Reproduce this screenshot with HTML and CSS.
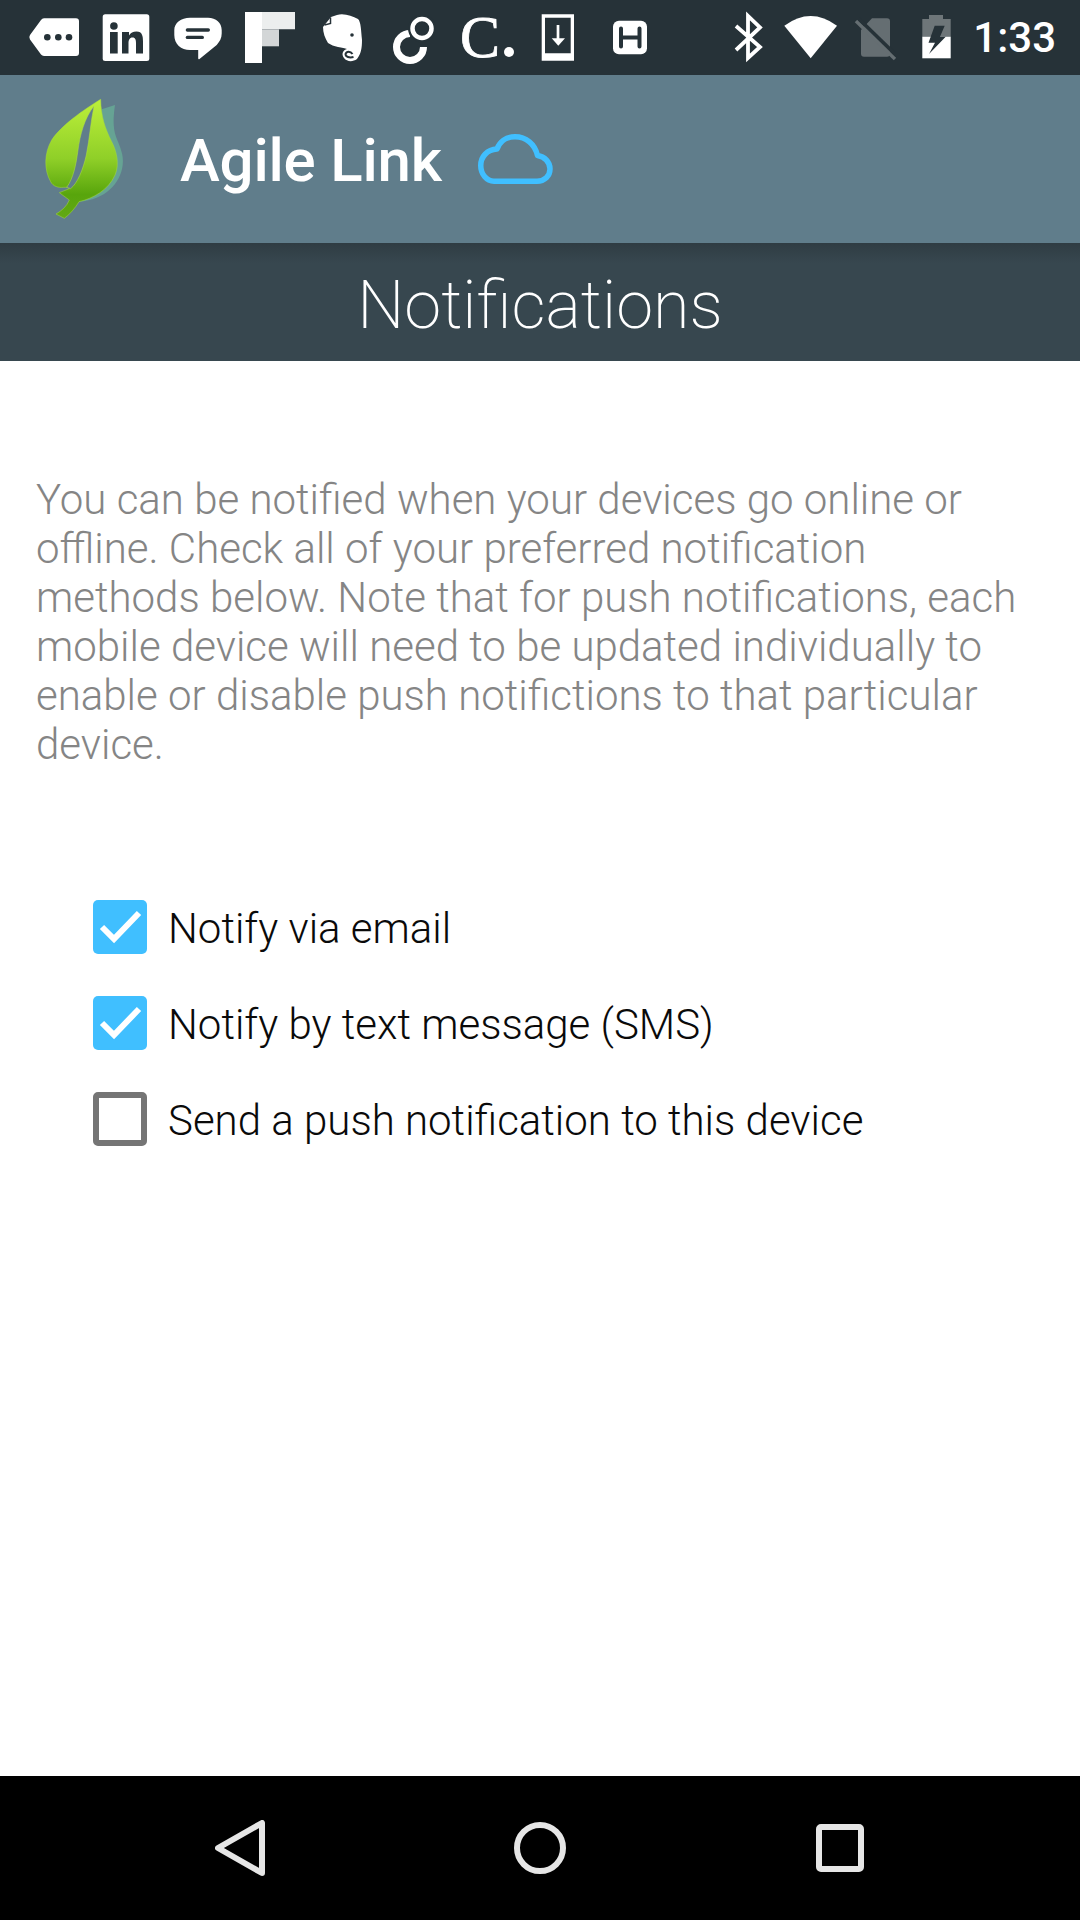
FILE: index.html
```html
<!DOCTYPE html>
<html lang="en">
<head>
<meta charset="utf-8">
<title>Agile Link - Notifications</title>
<link rel="stylesheet" href="styles.css">
</head>
<body>
<div class="screen">
  <div class="status">
    <div class="status-left">
      <div class="slot"><svg class="ico" viewBox="18 0 72 75"><path d="M44 18.300H76a3 3 0 0 1 3 3V53a3 3 0 0 1-3 3H44a4 4 0 0 1-3-1.500L30 39.500a4 4 0 0 1 0-4.400L41 20a4 4 0 0 1 3-1.700z" fill="#fff"/><circle cx="47.300" cy="37.300" r="3.300" fill="#263238"/><circle cx="58.300" cy="37.300" r="3.300" fill="#263238"/><circle cx="69" cy="37.300" r="3.300" fill="#263238"/></svg></div>
      <div class="slot"><svg class="ico" viewBox="90 0 72 75"><rect x="102.700" y="14.300" width="46.600" height="46.700" rx="2.500" fill="#fff"/><path d="M110 32h7.700v21.500H110zM122 32h7v3.500c1.500-2.500 4-4 7.500-4 6 0 6.500 5 6.500 10V53.500h-7V43c0-3-.5-5.500-3.500-5.500s-4 2.500-4 5.500v10.500H122z" fill="#263238"/><circle cx="113.900" cy="26" r="3.800" fill="#263238"/></svg></div>
      <div class="slot"><svg class="ico" viewBox="162 0 72 75"><path d="M190 17.700h18c8 0 13.700 5 13.700 12.300v3.500c0 4.500-2 8-5 11.500L199.500 59c-.7.500-1.300.3-1.300-.7V50H190c-9 0-15.700-6-15.700-15v-5c0-7 6.700-12.300 15.700-12.300z" fill="#fff"/><rect x="185.700" y="28.300" width="24.300" height="3.400" rx="1.700" fill="#263238"/><rect x="185.700" y="35.700" width="18.300" height="3.400" rx="1.700" fill="#263238"/></svg></div>
      <div class="slot"><svg class="ico" viewBox="234 0 72 75"><path d="M245 12h17v51h-17z" fill="#fff"/><path d="M262 12h33v17.300h-33z" fill="#eceeee"/><path d="M262 29.300h17v17h-17z" fill="#d3d6d7"/></svg></div>
      <div class="slot"><svg class="ico" viewBox="306 0 72 75"><path d="M331 17l6-2c7-2 15 1 21 4 3 3 3 11 4 21 0 8-1 14-5 19-4 3-10 3-13-1-3-4-1-8 3-9-2-1-5-1-9-2-4-1-7-2-10-4-3-5-5-10-5-16z" fill="#fff"/><path d="M330.500 17.500v6l-6 1.500" fill="none" stroke="#263238" stroke-width="1.500"/><path d="M352.500 54c-2-3-6-3-7 0 0 3 4 4 8 3" fill="none" stroke="#263238" stroke-width="2"/><circle cx="352" cy="35" r="1.800" fill="#263238"/></svg></div>
      <div class="slot"><svg class="ico" viewBox="378 0 72 75"><path d="M410 33.500A13.500 13.500 0 1 0 423.500 47" fill="none" stroke="#fff" stroke-width="7"/><circle cx="422" cy="28.500" r="10" fill="none" stroke="#263238" stroke-width="8"/><circle cx="422" cy="28.500" r="9.500" fill="none" stroke="#fff" stroke-width="4.500"/></svg></div>
      <div class="slot slot-text"><span class="serif-c">C</span><span class="serif-dot"></span></div>
      <div class="slot"><svg class="ico" viewBox="522 0 72 75"><path d="M541.700 14.300H574V60.700H541.700z" fill="#fff"/><path d="M545 17.700h25.700v35.600H545z" fill="#263238"/><path d="M558 25v15" stroke="#fff" stroke-width="2.700"/><path d="M551.700 38.300h13.300l-6.700 7.400z" fill="#fff"/></svg></div>
      <div class="slot"><svg class="ico" viewBox="594 0 72 75"><rect x="613" y="20.700" width="34" height="33.600" rx="6" fill="#fff"/><path d="M621 28.500v18M639.500 28.500v18M621 37.500h18.500" fill="none" stroke="#263238" stroke-width="4" stroke-linecap="round"/></svg></div>
    </div>
    <div class="status-right">
      <svg class="ico-bt" viewBox="735 0 30 75"><path d="M737 26l24 21-12 11V16l12 11.500L737 50" fill="none" stroke="#fff" stroke-width="3.800"/></svg>
      <svg class="ico-wifi" viewBox="784 0 55 75"><path d="M785.300 25.700Q811.700 6.300 838 25.700L811.700 58.300z" fill="#fff"/></svg>
      <svg class="ico-sim" viewBox="855 0 42 75"><path d="M873 18.300h15a3 3 0 0 1 3 3v32.400a3 3 0 0 1-3 3h-23a3 3 0 0 1-3-3V30z" fill="#656e72"/><path d="M857 21l39 38" stroke="#656e72" stroke-width="3.500"/><path d="M859.500 18.500l39 38" stroke="#263238" stroke-width="3.500"/></svg>
      <svg class="ico-batt" viewBox="922 0 31 75"><path d="M930 15h14v4h7.700v17.700H923.300V19H930z" fill="#6e7679"/><path d="M923.300 36.700h28.400v21.600h-28.400z" fill="#fff"/><path d="M935.700 25.700h10L941 36.700h5.700L930 54l6-11.300h-6.500z" fill="#263238"/></svg>
      <span class="clock">1:33</span>
    </div>
  </div>

  <header class="appbar">
    <svg class="logo" viewBox="0 0 315 405">
      <defs>
        <linearGradient id="leafGrad" x1="0" y1="0" x2="0" y2="1">
          <stop offset="0" stop-color="#bdf03a"/>
          <stop offset="0.5" stop-color="#8fcf28"/>
          <stop offset="0.8" stop-color="#58a50c"/>
          <stop offset="1" stop-color="#62a814"/>
        </linearGradient>
      </defs>
      <path d="M215 58L255 45C250 80 248 110 258 140C270 170 282 195 278 225C272 280 225 330 147 335L200 150Z" fill="#66a394"/>
      <path d="M212 28C160 60 95 105 65 150C42 190 42 240 62 275C70 290 85 293 100 292C108 292 114 290 118 296L88 308L118 330C110 350 95 362 78 372L103 385C120 372 135 355 147 335C190 325 235 300 255 255C270 220 258 180 245 155C225 115 213 80 212 28Z" fill="url(#leafGrad)" stroke="#a8dc38" stroke-width="1.500"/>
      <path d="M192 48C163 85 150 135 144 180C138 225 130 265 110 292L122 296C142 280 159 240 169 195C179 145 182 95 192 48Z" fill="#607d8b" stroke="#b4e540" stroke-width="1.500"/>
    </svg>
    <span class="brand">Agile Link</span>
    <svg class="cloud" viewBox="0 0 75 50"><path d="M16 47.250H59C66.500 47.250 72 42 72 35C72 28 66.500 22.500 59.500 21.500C57 10 48 2.750 37 2.750C28 2.750 21.500 8 19 15C9 15.500 2.750 23 2.750 31.500C2.750 40 8.500 47.250 16 47.250Z" fill="none" stroke="#40bfff" stroke-width="5.500" stroke-linejoin="round"/></svg>
  </header>

  <div class="subbar"><h1 class="subtitle">Notifications</h1></div>

  <main class="content">
    <p class="intro">You can be notified when your devices go online or offline. Check all of your preferred notification methods below. Note that for push notifications, each mobile device will need to be updated individually to enable or disable push notifictions to that particular device.</p>
    <ul class="options">
      <li class="option"><span class="box box-on"><svg class="tick" viewBox="0 0 54 54"><path d="M9 27l12 12L46 13" fill="none" stroke="#fff" stroke-width="6"/></svg></span><span class="label">Notify via email</span></li>
      <li class="option"><span class="box box-on"><svg class="tick" viewBox="0 0 54 54"><path d="M9 27l12 12L46 13" fill="none" stroke="#fff" stroke-width="6"/></svg></span><span class="label">Notify by text message (SMS)</span></li>
      <li class="option"><span class="box box-off"></span><span class="label">Send a push notification to this device</span></li>
    </ul>
  </main>

  <nav class="navbar">
    <div class="navslot"><svg class="nav-back" viewBox="0 0 50 56"><path d="M3 28L47 3v50z" fill="none" stroke="#e6e6e6" stroke-width="6" stroke-linejoin="round"/></svg></div>
    <div class="navslot"><svg class="nav-home" viewBox="0 0 52 52"><circle cx="26" cy="26" r="23" fill="none" stroke="#e6e6e6" stroke-width="6"/></svg></div>
    <div class="navslot"><svg class="nav-recent" viewBox="0 0 48 48"><rect x="3" y="3" width="42" height="42" rx="2" fill="none" stroke="#e6e6e6" stroke-width="6"/></svg></div>
  </nav>
</div>
</body>
</html>
```

FILE: styles.css
```css
* { box-sizing: border-box; }
html, body { margin: 0; padding: 0; }
body { width: 1080px; height: 1920px; font-family: Roboto, "Liberation Sans", sans-serif; background: #fff; }

.screen { width: 1080px; height: 1920px; display: flex; flex-direction: column; overflow: hidden; }

.status { height: 75px; flex: none; background: #263238; display: flex; align-items: center; justify-content: space-between; padding-left: 18px; padding-right: 24px; }
.status-left { display: flex; }
.slot { width: 72px; height: 75px; display: flex; }
.ico { width: 72px; height: 75px; display: block; }
.slot-text { align-items: baseline; justify-content: center; color: #fff; }
.serif-c { font-family: "Liberation Serif", serif; font-size: 60px; line-height: 75px; -webkit-text-stroke: 0.8px #fff; margin-left: 2px; }
.serif-dot { width: 10px; height: 10px; border-radius: 50%; background: #fff; margin-left: 4px; }

.status-right { display: flex; align-items: center; }
.ico-bt { width: 30px; height: 75px; margin-right: 19px; }
.ico-wifi { width: 55px; height: 75px; margin-right: 16px; }
.ico-sim { width: 42px; height: 75px; margin-right: 25px; }
.ico-batt { width: 31px; height: 75px; margin-right: 21px; }
.clock { color: #fff; font-size: 42px; font-weight: 500; line-height: 75px; }

.appbar { height: 168px; flex: none; background: #607d8b; display: flex; align-items: center; padding-left: 30px; }
.logo { width: 105px; height: 135px; margin-top: -3px; }
.brand { color: #fff; font-size: 60px; font-weight: 500; margin-left: 45px; letter-spacing: -0.2px; position: relative; top: 1px; }
.cloud { width: 75px; height: 50px; margin-left: 36px; }

.subbar { height: 118px; flex: none; background: linear-gradient(#2f3c43 0, #37474f 20px); display: flex; align-items: center; justify-content: center; padding-top: 7px; }
.subtitle { margin: 0; color: #fff; font-size: 66.5px; font-weight: 200; line-height: 1; }

.content { flex: 1; padding: 114px 50px 0 36px; }
.intro { margin: 0; color: #858585; font-size: 42px; font-weight: 300; line-height: 49px; }
.options { list-style: none; margin: 131px 0 0; padding: 0 0 0 57px; display: flex; flex-direction: column; gap: 42px; }
.option { display: flex; align-items: center; height: 54px; }
.box { width: 54px; height: 54px; border-radius: 5px; flex: none; display: block; }
.box-on { background: #40bfff; }
.box-off { border: 6px solid #757575; }
.tick { width: 54px; height: 54px; display: block; }
.label { margin-left: 21px; padding-top: 2px; color: #0a0a0a; font-size: 42px; font-weight: 300; }

.navbar { height: 144px; flex: none; background: #000; display: flex; justify-content: center; align-items: center; }
.navslot { width: 300px; display: flex; justify-content: center; align-items: center; }
.nav-back { width: 50px; height: 56px; }
.nav-home { width: 52px; height: 52px; }
.nav-recent { width: 48px; height: 48px; }
```
